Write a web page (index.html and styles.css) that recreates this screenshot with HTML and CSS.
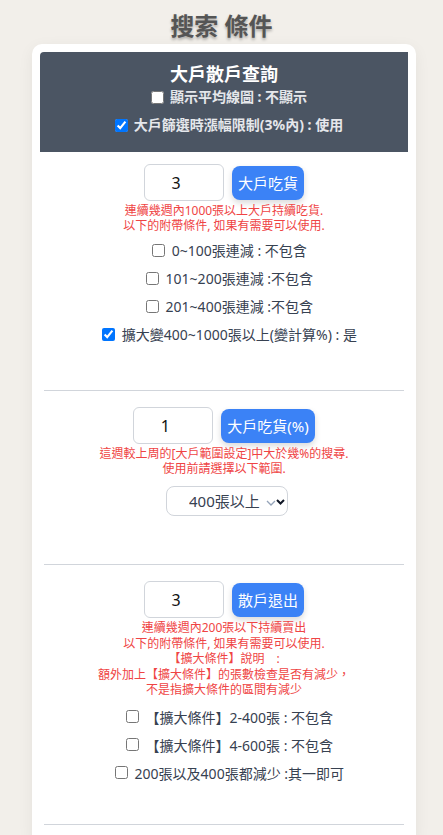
FILE: index.html
```html
<!DOCTYPE html>
<html lang="zh-Hant">
<head>
<meta charset="utf-8">
<title>搜索 條件</title>
<link rel="stylesheet" href="styles.css">
</head>
<body>
<h1 class="page-title">搜索 條件</h1>
<div class="card">
  <div class="card-head">
    <div class="head-title">大戶散戶查詢</div>
    <label class="head-row"><input type="checkbox"> 顯示平均線圖 : 不顯示</label>
    <label class="head-row"><input type="checkbox" checked> 大戶篩選時漲幅限制(3%內) : 使用</label>
  </div>

  <section class="sec sec-first">
    <div class="ctrl">
      <input class="num" type="text" value="3">
      <button class="btn">大戶吃貨</button>
    </div>
    <p class="note"><span class="line">連續幾週內1000張以上大戶持續吃貨.</span><span class="line">以下的附帶條件, 如果有需要可以使用.</span></p>
    <div class="checks">
      <label class="chk"><input type="checkbox"> 0~100張連減 : 不包含</label>
      <label class="chk"><input type="checkbox"> 101~200張連減 :不包含</label>
      <label class="chk"><input type="checkbox"> 201~400張連減 :不包含</label>
      <label class="chk"><input type="checkbox" checked> 擴大變400~1000張以上(變計算%) : 是</label>
    </div>
  </section>
  <hr class="div div-1">

  <section class="sec">
    <div class="ctrl">
      <input class="num" type="text" value="1">
      <button class="btn">大戶吃貨(%)</button>
    </div>
    <p class="note"><span class="line">這週較上周的[大戶範圍設定]中大於幾%的搜尋.</span><span class="line">使用前請選擇以下範圍.</span></p>
    <div class="sel-wrap">
      <select class="sel"><option>400張以上</option></select>
    </div>
  </section>
  <hr class="div div-2">

  <section class="sec">
    <div class="ctrl">
      <input class="num" type="text" value="3">
      <button class="btn">散戶退出</button>
    </div>
    <p class="note note-long"><span class="line">連續幾週內200張以下持續賣出</span><span class="line">以下的附帶條件, 如果有需要可以使用.</span><span class="line">【擴大條件】說明　:</span><span class="line">額外加上【擴大條件】的張數檢查是否有減少，</span><span class="line">不是指擴大條件的區間有減少</span></p>
    <div class="checks checks-3">
      <label class="chk"><input type="checkbox"> 【擴大條件】2-400張 : 不包含</label>
      <label class="chk"><input type="checkbox"> 【擴大條件】4-600張 : 不包含</label>
      <label class="chk"><input type="checkbox"> 200張以及400張都減少 :其一即可</label>
    </div>
  </section>
  <hr class="div div-3">
</div>
</body>
</html>
```
FILE: styles.css
```css
* { box-sizing: border-box; }
html, body { margin: 0; padding: 0; }
body {
  background: #f2efea;
  font-family: "Noto Sans", "Noto Sans CJK TC", sans-serif;
  color: #374151;
  height: 835px;
  overflow: hidden;
}
.page-title {
  margin: 0;
  padding-top: 10px;
  height: 44px;
  text-align: center;
  font-size: 24px;
  line-height: 32px;
  font-weight: 700;
  color: #555;
  text-shadow: 0 2px 3px rgba(0,0,0,0.3);
}
.card {
  margin-left: 32px;
  width: 384px;
  background: #fff;
  border-radius: 10px;
  padding: 8px;
  box-shadow: 0 4px 16px rgba(0,0,0,0.06);
  min-height: 800px;
}
.card-head {
  background: #4b5563;
  border-radius: 4px 0 0 0;
  height: 100px;
  padding-top: 10px;
  display: flex;
  flex-direction: column;
  align-items: center;
}
.head-title {
  color: #fff;
  font-size: 18px;
  font-weight: 700;
  line-height: 24px;
}
.head-row {
  display: flex;
  align-items: center;
  color: #e5e7eb;
  font-size: 14px;
  font-weight: 700;
  line-height: 22px;
  padding-left: 10px;
}
.head-row + .head-row { margin-top: 6px; }
.head-row input { margin: 0 6px 0 0; width: 13px; height: 13px; }
.sec { padding-top: 16px; }
.sec-first { padding-top: 12px; }
.ctrl {
  display: flex;
  justify-content: center;
  align-items: center;
  gap: 8px;
}
.num {
  width: 80px;
  height: 37px;
  border: 1px solid #d1d5db;
  border-radius: 6px;
  text-align: center;
  font-family: "Noto Sans", sans-serif;
  font-size: 16px;
  color: #111;
  padding: 0 16px 0 0;
}
.btn {
  height: 34px;
  padding: 0 6px;
  border: none;
  border-radius: 8px;
  background: #3b82f6;
  color: #fff;
  font-family: "Noto Sans", "Noto Sans CJK TC", sans-serif;
  font-size: 15px;
  box-shadow: 0 3px 6px rgba(0,0,0,0.15);
}
.note {
  margin: 2px 0 0;
  text-align: center;
  color: #ef4444;
  font-size: 12px;
}
.line { display: block; height: 15px; line-height: 15px; }
.note-long .line { height: 15.6px; line-height: 15.6px; }
.checks {
  margin-top: 3px;
  display: flex;
  flex-direction: column;
  align-items: center;
}
.checks-3 { margin-top: 5px; }
.chk {
  display: flex;
  align-items: center;
  height: 28px;
  font-size: 14px;
  color: #374151;
  white-space: pre;
  padding-left: 11px;
}
.chk input { margin: 0 3px 0 0; width: 13px; height: 13px; }
.sel-wrap { display: flex; justify-content: center; margin-top: 10px; padding-left: 6px; }
.sel {
  appearance: none;
  -webkit-appearance: none;
  width: 122px;
  height: 30px;
  border: 1px solid #d1d5db;
  border-radius: 8px;
  background-color: #fff;
  background-image:
    url("data:image/svg+xml;utf8,<svg xmlns='http://www.w3.org/2000/svg' width='10' height='6' viewBox='0 0 10 6'><path d='M1 1l4 4 4-4' fill='none' stroke='%2394a3b8' stroke-width='1.3'/></svg>"),
    url("data:image/svg+xml;utf8,<svg xmlns='http://www.w3.org/2000/svg' width='9' height='6' viewBox='0 0 9 6'><path d='M1 1l3.5 3.5L8 1' fill='none' stroke='%23111827' stroke-width='2'/></svg>");
  background-repeat: no-repeat, no-repeat;
  background-position: 99px 13px, 109px 12px;
  padding: 0 0 0 22px;
  font-family: "Noto Sans", "Noto Sans CJK TC", sans-serif;
  font-size: 15px;
  color: #374151;
}
.div {
  border: none;
  border-top: 1px solid #d1d5db;
  margin: 0 4px;
}
.div-1 { margin-top: 42px; }
.div-2 { margin-top: 48px; }
.div-3 { margin-top: 37px; }
```
